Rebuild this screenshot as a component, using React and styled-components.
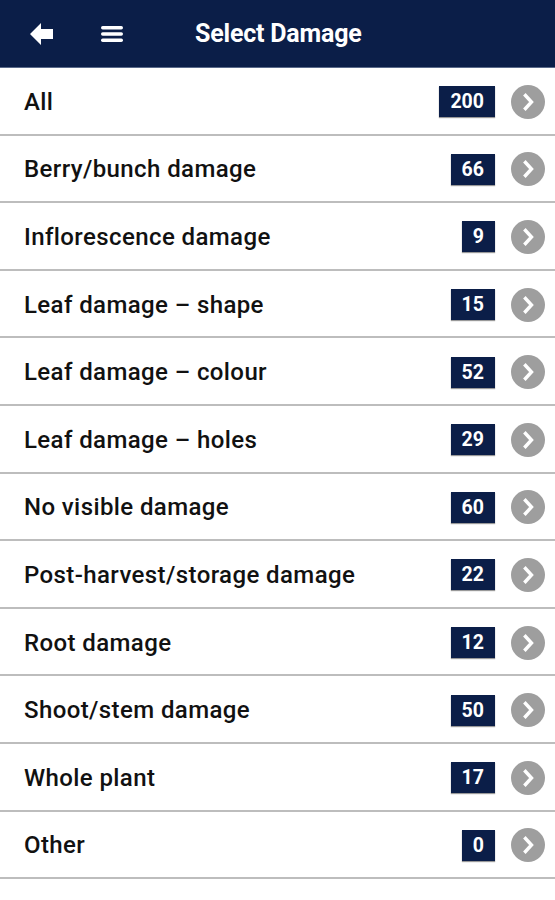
import React from "react";
import styled, { createGlobalStyle } from "styled-components";

const Global = createGlobalStyle`
  html, body { margin: 0; padding: 0; background: #fff; }
  body { font-family: Roboto, "Noto Sans", sans-serif; }
`;

const Page = styled.div`
  width: 555px;
  min-height: 900px;
  background: #fff;
`;

const Header = styled.header`
  height: 68px;
  background: #0b1e48;
  display: flex;
  align-items: center;
  color: #fff;
  box-sizing: border-box;
  border-bottom: 1px solid #5a6a8a;
`;

const IconButton = styled.div`
  width: 24px;
  height: 24px;
  margin-left: ${(p) => p.$ml}px;
  display: flex;
  align-items: center;
  justify-content: center;
`;

const Title = styled.h1`
  margin: 0 0 0 71px;
  font-size: 25px;
  font-weight: 700;
  letter-spacing: -0.2px;
`;

const List = styled.ul`
  list-style: none;
  margin: 0;
  padding: 0;
`;

const Row = styled.li`
  height: 67.6px;
  box-sizing: border-box;
  border-bottom: 2px solid #bdbdbd;
  display: flex;
  align-items: center;
  padding: 2px 10px 0 24px;
`;

const Label = styled.span`
  flex: 1;
  font-size: 24px;
  font-weight: 500;
  color: #111;
  letter-spacing: 0.4px;
`;

const Badge = styled.span`
  min-width: 33px;
  height: 31px;
  box-sizing: border-box;
  padding: 0 11px;
  background: #0b1e48;
  color: #fff;
  font-size: 19.5px;
  font-weight: 700;
  display: flex;
  align-items: center;
  justify-content: center;
  box-shadow: 0 1px 1px rgba(0, 0, 0, 0.4);
`;

const Chevron = styled.span`
  width: 34px;
  height: 34px;
  border-radius: 50%;
  background: #9e9e9e;
  margin-left: 16px;
  display: flex;
  align-items: center;
  justify-content: center;
`;

const items = [
  ["All", 200],
  ["Berry/bunch damage", 66],
  ["Inflorescence damage", 9],
  ["Leaf damage \u2013 shape", 15],
  ["Leaf damage \u2013 colour", 52],
  ["Leaf damage \u2013 holes", 29],
  ["No visible damage", 60],
  ["Post-harvest/storage damage", 22],
  ["Root damage", 12],
  ["Shoot/stem damage", 50],
  ["Whole plant", 17],
  ["Other", 0],
];

export default function App() {
  return (
    <Page>
      <Global />
      <Header>
        <IconButton $ml={30}>
          <svg width="24" height="22" viewBox="0 0 24 22">
            <path d="M0 11 L11 0 L11 6 L23 6 L23 16 L11 16 L11 22 Z" fill="#fff" />
          </svg>
        </IconButton>
        <IconButton $ml={46}>
          <svg width="24" height="18" viewBox="0 0 24 18">
            <rect x="1" y="1" width="22" height="3.4" rx="1.7" fill="#fff" />
            <rect x="1" y="7.3" width="22" height="3.4" rx="1.7" fill="#fff" />
            <rect x="1" y="13.6" width="22" height="3.4" rx="1.7" fill="#fff" />
          </svg>
        </IconButton>
        <Title>Select Damage</Title>
      </Header>
      <List>
        {items.map(([label, n]) => (
          <Row key={label}>
            <Label>{label}</Label>
            <Badge>{n}</Badge>
            <Chevron>
              <svg width="20" height="20" viewBox="0 0 20 20">
                <path d="M7.5 3.5 L13.5 10 L7.5 16.5" stroke="#fff" strokeWidth="3.4" fill="none" strokeLinecap="square" />
              </svg>
            </Chevron>
          </Row>
        ))}
      </List>
    </Page>
  );
}
